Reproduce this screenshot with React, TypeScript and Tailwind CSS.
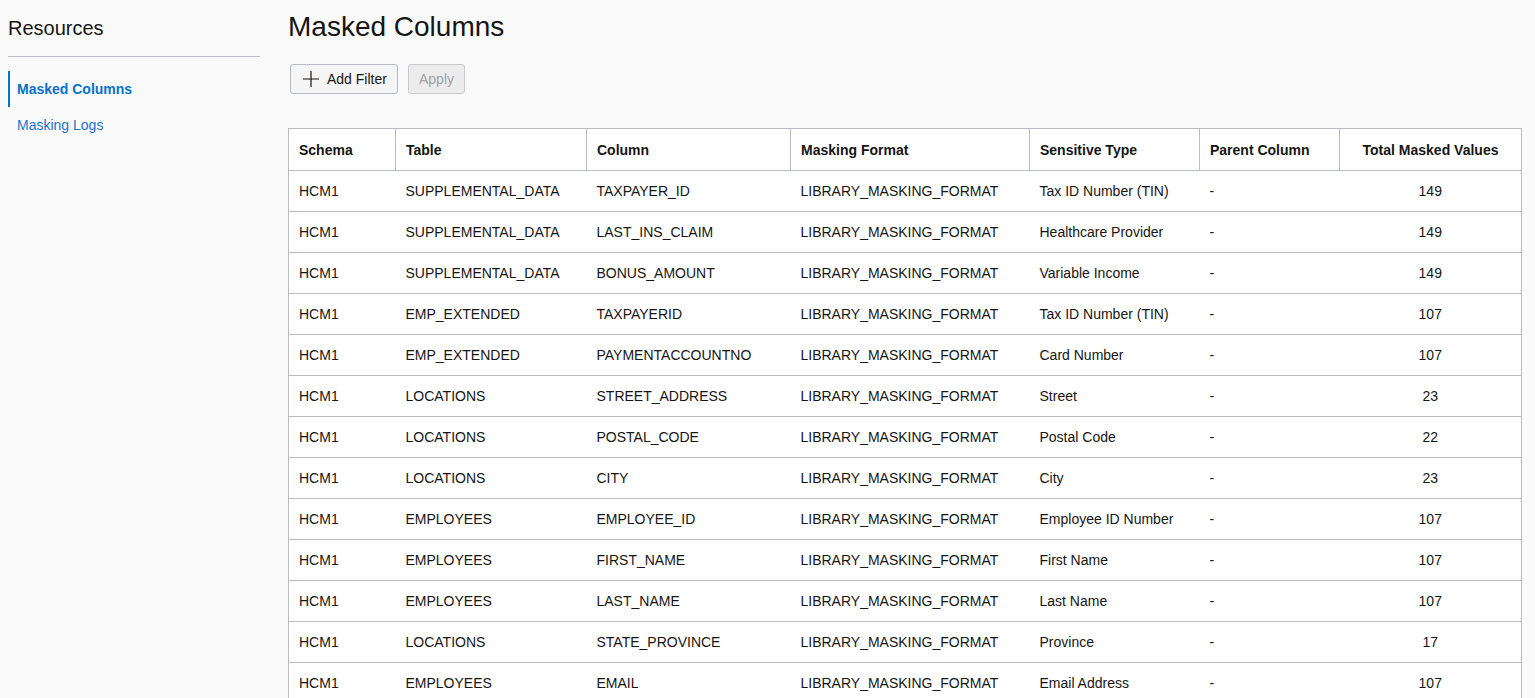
import React from "react";

const rows: [string, string, string, string, string, string, string][] = [
  ["HCM1", "SUPPLEMENTAL_DATA", "TAXPAYER_ID", "LIBRARY_MASKING_FORMAT", "Tax ID Number (TIN)", "-", "149"],
  ["HCM1", "SUPPLEMENTAL_DATA", "LAST_INS_CLAIM", "LIBRARY_MASKING_FORMAT", "Healthcare Provider", "-", "149"],
  ["HCM1", "SUPPLEMENTAL_DATA", "BONUS_AMOUNT", "LIBRARY_MASKING_FORMAT", "Variable Income", "-", "149"],
  ["HCM1", "EMP_EXTENDED", "TAXPAYERID", "LIBRARY_MASKING_FORMAT", "Tax ID Number (TIN)", "-", "107"],
  ["HCM1", "EMP_EXTENDED", "PAYMENTACCOUNTNO", "LIBRARY_MASKING_FORMAT", "Card Number", "-", "107"],
  ["HCM1", "LOCATIONS", "STREET_ADDRESS", "LIBRARY_MASKING_FORMAT", "Street", "-", "23"],
  ["HCM1", "LOCATIONS", "POSTAL_CODE", "LIBRARY_MASKING_FORMAT", "Postal Code", "-", "22"],
  ["HCM1", "LOCATIONS", "CITY", "LIBRARY_MASKING_FORMAT", "City", "-", "23"],
  ["HCM1", "EMPLOYEES", "EMPLOYEE_ID", "LIBRARY_MASKING_FORMAT", "Employee ID Number", "-", "107"],
  ["HCM1", "EMPLOYEES", "FIRST_NAME", "LIBRARY_MASKING_FORMAT", "First Name", "-", "107"],
  ["HCM1", "EMPLOYEES", "LAST_NAME", "LIBRARY_MASKING_FORMAT", "Last Name", "-", "107"],
  ["HCM1", "LOCATIONS", "STATE_PROVINCE", "LIBRARY_MASKING_FORMAT", "Province", "-", "17"],
  ["HCM1", "EMPLOYEES", "EMAIL", "LIBRARY_MASKING_FORMAT", "Email Address", "-", "107"],
];

const headers = ["Schema", "Table", "Column", "Masking Format", "Sensitive Type", "Parent Column", "Total Masked Values"];
const widths = [107, 191, 204, 239, 170, 140, 182];

export default function App() {
  return (
    <div
      className="min-h-screen bg-[#fafafa] text-[#161513] flex"
      style={{ fontFamily: '"Liberation Sans", Arial, sans-serif' }}
    >
      <aside className="w-[252px] ml-2 shrink-0">
        <h2 className="mt-[16px] text-[20px] leading-[24px] text-[#161513]">Resources</h2>
        <div className="mt-[16px] h-px bg-[#b9bcc4]" />
        <nav className="mt-[14px] flex flex-col">
          <a className="h-[36px] flex items-center border-l-2 border-[#0572ce] pl-[7px] text-[14px] font-bold text-[#0572ce]">
            Masked Columns
          </a>
          <a className="h-[36px] flex items-center pl-[9px] text-[14px] text-[#1c73c9]">
            Masking Logs
          </a>
        </nav>
      </aside>

      <main className="ml-[28px] w-[1233px] shrink-0">
        <h1 className="mt-[10px] text-[28px] leading-[34px] text-[#161513]">Masked Columns</h1>
        <div className="mt-[20px] ml-[2px] flex gap-[10px]">
          <button className="h-[30px] w-[108px] flex items-center gap-[7px] pl-[11px] border border-[#b9bcc4] rounded-[3px] bg-[#f5f5f5] text-[14px] text-[#161513]">
            <svg width="18" height="18" viewBox="0 0 18 18" fill="none" stroke="#161513" strokeWidth="1.2">
              <path d="M9 1v16M1 9h16" />
            </svg>
            <span>Add Filter</span>
          </button>
          <button className="h-[30px] w-[57px] flex items-center justify-center border border-[#c8cace] rounded-[3px] bg-[#ececec] text-[14px] text-[#a3a3a3]">
            Apply
          </button>
        </div>

        <table className="mt-[34px] table-fixed border-collapse bg-white w-[1233px] text-[14px]">
          <colgroup>
            {widths.map((w, i) => (
              <col key={i} style={{ width: w }} />
            ))}
          </colgroup>
          <thead>
            <tr className="h-[42px]">
              {headers.map((h, i) => (
                <th
                  key={h}
                  className={`border border-[#b9bcc4] px-[10px] pt-[2px] font-bold text-[#161513] ${
                    i === 6 ? "text-center" : "text-left"
                  }`}
                >
                  {h}
                </th>
              ))}
            </tr>
          </thead>
          <tbody>
            {rows.map((r, ri) => (
              <tr key={ri} className="h-[41px] border-b border-[#b9bcc4]">
                {r.map((c, ci) => (
                  <td
                    key={ci}
                    className={`px-[10px] text-[#161513] ${ci === 0 ? "border-l border-[#b9bcc4]" : ""} ${
                      ci === 6 ? "text-center border-r border-[#b9bcc4]" : ""
                    }`}
                  >
                    {c}
                  </td>
                ))}
              </tr>
            ))}
          </tbody>
        </table>
      </main>
    </div>
  );
}
